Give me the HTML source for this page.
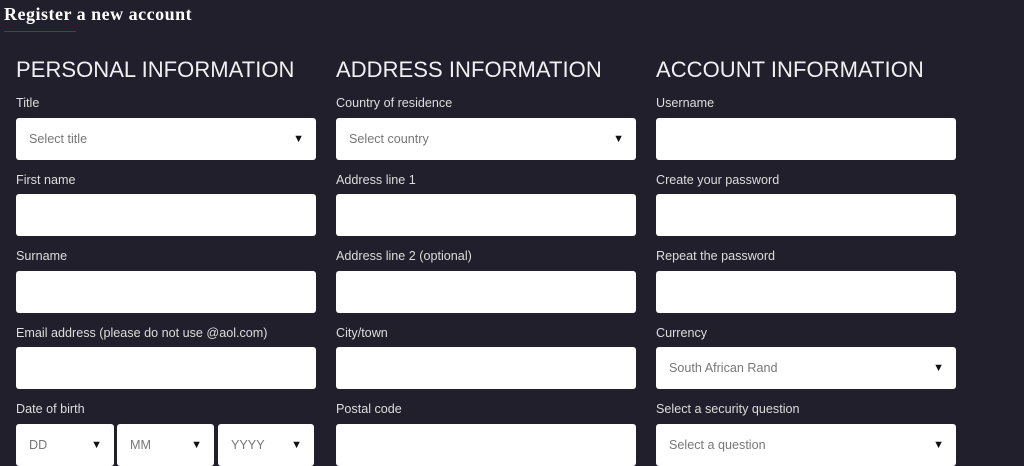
<!DOCTYPE html><html><head><style>
body{margin:0;width:1024px;height:453px;overflow:hidden;background:#201f2b;font-family:"Liberation Sans",sans-serif;color:#e6e6ea;position:relative}
.t{position:absolute;left:4px;top:4px;font:bold 18px "Liberation Serif",serif;color:#fff;letter-spacing:0.5px}
.u{position:absolute;left:4px;top:31px;width:72px;height:1px;background:#9a1c3c}
.h{position:absolute;top:57px;font-size:22px;color:#f0f0f3;letter-spacing:0.05px}
.l{position:absolute;font-size:12.6px;color:#ddd}
.i{position:absolute;width:300px;height:42px;background:#fff;border-radius:3px}
.s{font-size:12.6px;color:#777;line-height:42px;padding-left:13px;box-sizing:border-box}
.s:after{content:"▼";position:absolute;right:12px;top:0;color:#111;font-size:11px}
</style></head><body>
<div class="t">Register a new account</div><div class="u"></div>
<div class="h" style="left:16px">PERSONAL INFORMATION</div>
<div class="h" style="left:336px">ADDRESS INFORMATION</div>
<div class="h" style="left:656px">ACCOUNT INFORMATION</div>

<div class="l" style="left:16px;top:96px">Title</div><div class="i s" style="left:16px;top:118px">Select title</div>
<div class="l" style="left:16px;top:173px">First name</div><div class="i" style="left:16px;top:194px"></div>
<div class="l" style="left:16px;top:249px">Surname</div><div class="i" style="left:16px;top:271px"></div>
<div class="l" style="left:16px;top:326px">Email address (please do not use @aol.com)</div><div class="i" style="left:16px;top:347px"></div>
<div class="l" style="left:16px;top:402px">Date of birth</div>
<div class="i s" style="left:16px;top:424px;width:98px">DD</div>
<div class="i s" style="left:117px;top:424px;width:97px">MM</div>
<div class="i s" style="left:218px;top:424px;width:96px">YYYY</div>

<div class="l" style="left:336px;top:96px">Country of residence</div><div class="i s" style="left:336px;top:118px">Select country</div>
<div class="l" style="left:336px;top:173px">Address line 1</div><div class="i" style="left:336px;top:194px"></div>
<div class="l" style="left:336px;top:249px">Address line 2 (optional)</div><div class="i" style="left:336px;top:271px"></div>
<div class="l" style="left:336px;top:326px">City/town</div><div class="i" style="left:336px;top:347px"></div>
<div class="l" style="left:336px;top:402px">Postal code</div><div class="i" style="left:336px;top:424px"></div>

<div class="l" style="left:656px;top:96px">Username</div><div class="i" style="left:656px;top:118px"></div>
<div class="l" style="left:656px;top:173px">Create your password</div><div class="i" style="left:656px;top:194px"></div>
<div class="l" style="left:656px;top:249px">Repeat the password</div><div class="i" style="left:656px;top:271px"></div>
<div class="l" style="left:656px;top:326px">Currency</div><div class="i s" style="left:656px;top:347px">South African Rand</div>
<div class="l" style="left:656px;top:402px">Select a security question</div><div class="i s" style="left:656px;top:424px">Select a question</div>
</body></html>
